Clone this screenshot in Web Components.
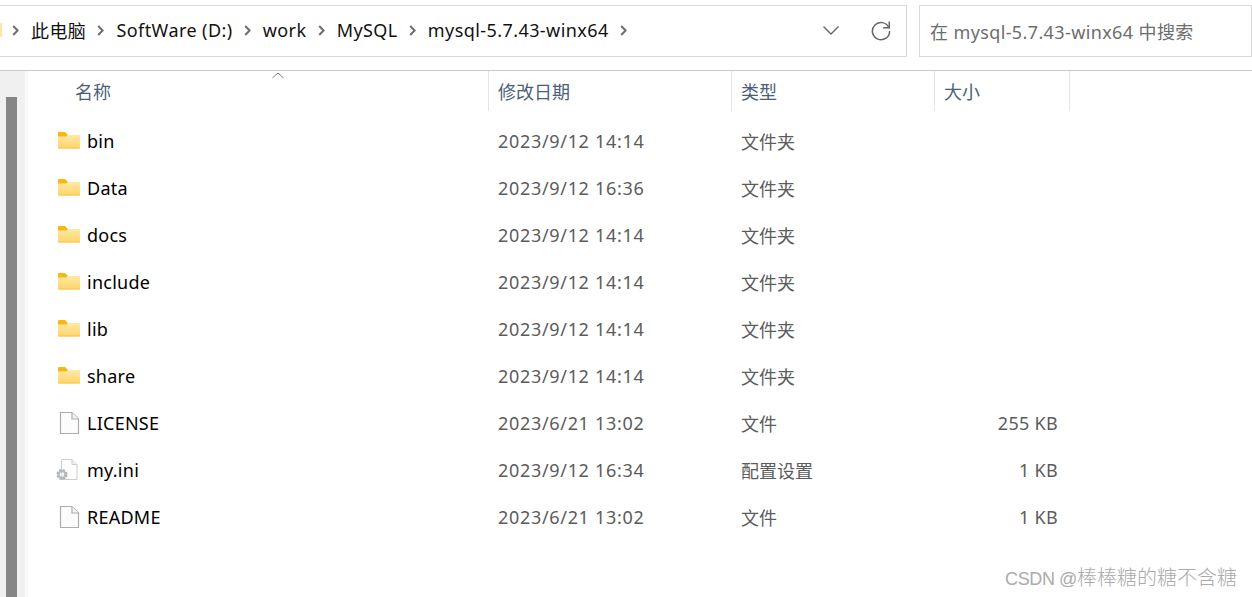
<!DOCTYPE html>
<html lang="zh">
<head>
<meta charset="utf-8">
<title>mysql-5.7.43-winx64</title>
<style>
html, body { margin: 0; padding: 0; background: #fff; }
body { width: 1252px; height: 597px; overflow: hidden; font-family: "Noto Sans", "Noto Sans CJK SC", sans-serif; }
</style>
</head>
<body>
<explorer-window>
    <address-bar slot="top">
        <crumb-item>此电脑</crumb-item>
        <crumb-item>SoftWare (D:)</crumb-item>
        <crumb-item>work</crumb-item>
        <crumb-item>MySQL</crumb-item>
        <crumb-item>mysql-5.7.43-winx64</crumb-item>
    </address-bar>
    <list-header slot="head"></list-header>
    <file-row icon="folder" name="bin" date="2023/9/12 14:14" type="文件夹"></file-row>
    <file-row icon="folder" name="Data" date="2023/9/12 16:36" type="文件夹"></file-row>
    <file-row icon="folder" name="docs" date="2023/9/12 14:14" type="文件夹"></file-row>
    <file-row icon="folder" name="include" date="2023/9/12 14:14" type="文件夹"></file-row>
    <file-row icon="folder" name="lib" date="2023/9/12 14:14" type="文件夹"></file-row>
    <file-row icon="folder" name="share" date="2023/9/12 14:14" type="文件夹"></file-row>
    <file-row icon="file" name="LICENSE" date="2023/6/21 13:02" type="文件" size="255 KB"></file-row>
    <file-row icon="ini" name="my.ini" date="2023/9/12 16:34" type="配置设置" size="1 KB"></file-row>
    <file-row icon="file" name="README" date="2023/6/21 13:02" type="文件" size="1 KB"></file-row>
</explorer-window>
<script>
(function() {
    const FONT = '"Noto Sans", "Noto Sans CJK SC", sans-serif'

    const ICONS = {
        folder: `<svg width="23" height="18" viewBox="0 0 23 18" style="margin-top:-2px">
            <defs><linearGradient id="f" x1="0" y1="0" x2="0" y2="1">
                <stop offset="0" stop-color="#ffe9a6"/><stop offset="1" stop-color="#ffd468"/>
            </linearGradient></defs>
            <path d="M0 3.5V1.8C0 1.3.3 1 .8 1H7l2.5 2.5V6H0z" fill="#f9b712"/>
            <path d="M0 5.5H8.5L10 4h11.2c.5 0 .8.3.8.8V16.5c0 .6-.4 1-1 1H1c-.6 0-1-.4-1-1z" fill="url(#f)"/>
            <path d="M0 16.5h22v.2c0 .5-.4.8-.9.8H1c-.6 0-1-.3-1-.8z" fill="#f5c654"/>
        </svg>`,
        file: `<svg width="23" height="24" viewBox="0 0 23 24">
            <path d="M2.5 1.5H14L20.5 8v14.5H2.5z" fill="#fcfcfc" stroke="#adadad" stroke-width="1.2"/>
            <path d="M14 1.5V8h6.5" fill="#f4f4f4" stroke="#adadad" stroke-width="1.2"/>
        </svg>`,
        ini: `<svg width="23" height="24" viewBox="0 0 23 24" style="overflow:visible">
            <path d="M3.5 1.5H14L19 6.5v15H3.5z" fill="#fdfdfd" stroke="#cdcdcd"/>
            <path d="M14 1.5V6.5h5" fill="#f2f2f2" stroke="#cdcdcd"/>
            <circle cx="4" cy="16.5" r="4.3" fill="none" stroke="#a9afb4" stroke-width="2.4" stroke-dasharray="2.2 1.2"/>
            <circle cx="4" cy="16.5" r="3.4" fill="none" stroke="#b5bbc0" stroke-width="2.2"/>
            <circle cx="4" cy="16.5" r="1.5" fill="#e6e8ea"/>
        </svg>`
    }

    const windowTpl = document.createElement('template')
    windowTpl.innerHTML = `
        <style>
            :host { display: flex; flex-direction: column; width: 1252px; height: 597px; font-family: ${FONT}; overflow: hidden; }
            .top { flex: none; padding-top: 5px; box-sizing: border-box; border-bottom: 1px solid #c9c9c9; height: 71px; }
            .body { flex: 1; display: flex; min-height: 0; }
            .side { flex: none; background: #f0f0f0; border-right: 3px solid #f9f9f9; padding-top: 26px; box-sizing: border-box; width: 28px; }
            .thumb { width: 11px; margin-left: 6px; height: 100%; background: #868686; }
            .main { flex: 1; min-width: 0; }
        </style>
        <div class="top"><slot name="top"></slot></div>
        <div class="body">
            <div class="side"><div class="thumb"></div></div>
            <div class="main"><slot name="head"></slot><slot></slot></div>
        </div>`

    class ExplorerWindow extends HTMLElement {
        constructor() {
            super()
            this.attachShadow({mode: 'open'})
            this.shadowRoot.appendChild(windowTpl.content.cloneNode(true))
        }
    }
    customElements.define('explorer-window', ExplorerWindow)

    const barTpl = document.createElement('template')
    barTpl.innerHTML = `
        <style>
            :host { display: flex; height: 52px; gap: 12px; margin-left: -2px; }
            .path, .search { box-sizing: border-box; height: 52px; border: 1px solid #d9d9d9; background: #fff; display: flex; align-items: center; }
            .path { width: 909px; padding-left: 1px; }
            .tag { width: 2px; height: 14px; background: #ffe6a8; margin-right: 10px; flex: none; margin-top: -2px; }
            .crumbs { flex: 1; display: flex; align-items: center; margin-top: -2px; }
            .drop { margin: -2px 30px 0 0; display: block; }
            .refresh { margin: -2px 14px 0 0; display: block; }
            .search { flex: 1; padding-left: 10px; font-size: 18px; letter-spacing: .38px; color: #6d6d6d; white-space: nowrap; }
        </style>
        <div class="path">
            <span class="tag"></span>
            <div class="crumbs"><slot></slot></div>
            <svg class="drop" width="18" height="11" viewBox="0 0 18 11"><path d="M1.5 1.5L9 9l7.5-7.5" fill="none" stroke="#666" stroke-width="1.4"/></svg>
            <svg class="refresh" width="22" height="22" viewBox="0 0 22 22"><path d="M18.8 8.5A8.6 8.6 0 1 0 19.6 12" fill="none" stroke="#666" stroke-width="1.5"/><path d="M19.3 2.6v6.2h-6.2" fill="none" stroke="#666" stroke-width="1.5"/></svg>
        </div>
        <div class="search">在 mysql-5.7.43-winx64 中搜索</div>`

    class AddressBar extends HTMLElement {
        constructor() {
            super()
            this.attachShadow({mode: 'open'})
            this.shadowRoot.appendChild(barTpl.content.cloneNode(true))
        }
    }
    customElements.define('address-bar', AddressBar)

    const crumbTpl = document.createElement('template')
    crumbTpl.innerHTML = `
        <style>
            :host { display: flex; align-items: center; font-size: 18px; letter-spacing: .42px; color: #111; white-space: nowrap; }
            svg { margin: 1px 12px 0 0; flex: none; }
            span { margin-right: 11.2px; }
        </style>
        <svg width="7" height="11" viewBox="0 0 7 11"><path d="M1.2 1l4.4 4.5L1.2 10" fill="none" stroke="#6e6e6e" stroke-width="2"/></svg>
        <span><slot></slot></span>`

    class CrumbItem extends HTMLElement {
        constructor() {
            super()
            this.attachShadow({mode: 'open'})
            this.shadowRoot.appendChild(crumbTpl.content.cloneNode(true))
        }
        connectedCallback() {
            // the last crumb also ends in a chevron
            if (!this.nextElementSibling && !this.shadowRoot.querySelector('.end')) {
                const tail = this.shadowRoot.querySelector('svg').cloneNode(true)
                tail.classList.add('end')
                this.shadowRoot.appendChild(tail)
            }
        }
    }
    customElements.define('crumb-item', CrumbItem)

    const headTpl = document.createElement('template')
    headTpl.innerHTML = `
        <style>
            :host { display: grid; grid-template-columns: 461px 243px 203px 135px; height: 40px; margin-bottom: 6px; font-size: 18px; color: #4c607a; position: relative; }
            div { border-right: 1px solid #e5e5e5; display: flex; align-items: center; padding-left: 9px; white-space: nowrap; }
            .name { padding-left: 47px; }
            .sort { position: absolute; left: 244px; top: 1px; }
        </style>
        <div class="name">名称</div>
        <div>修改日期</div>
        <div>类型</div>
        <div>大小</div>
        <svg class="sort" width="12" height="7" viewBox="0 0 12 7"><path d="M.5 6L6 1l5.5 5" fill="none" stroke="#777" stroke-width="1"/></svg>`

    class ListHeader extends HTMLElement {
        constructor() {
            super()
            this.attachShadow({mode: 'open'})
            this.shadowRoot.appendChild(headTpl.content.cloneNode(true))
        }
    }
    customElements.define('list-header', ListHeader)

    const rowTpl = document.createElement('template')
    rowTpl.innerHTML = `
        <style>
            :host { display: grid; grid-template-columns: 461px 243px 203px 123px; height: 47px; align-items: center; font-size: 18px; white-space: nowrap; }
            .name { display: flex; align-items: center; color: #000; padding-left: 30px; }
            .icon { width: 23px; height: 24px; display: flex; align-items: center; margin-right: 6px; }
            .label { letter-spacing: .25px; }
            .date, .type { color: #5c5c5c; padding-left: 9px; }
            .date { letter-spacing: .68px; }
            .size { color: #5c5c5c; text-align: right; letter-spacing: .3px; }
        </style>
        <div class="name"><span class="icon"></span><span class="label"></span></div>
        <div class="date"></div>
        <div class="type"></div>
        <div class="size"></div>`

    class FileRow extends HTMLElement {
        constructor() {
            super()
            this.attachShadow({mode: 'open'})
            this.shadowRoot.appendChild(rowTpl.content.cloneNode(true))
        }
        connectedCallback() {
            const root = this.shadowRoot
            root.querySelector('.icon').innerHTML = ICONS[this.getAttribute('icon')]
            root.querySelector('.label').textContent = this.getAttribute('name')
            root.querySelector('.date').textContent = this.getAttribute('date')
            root.querySelector('.type').textContent = this.getAttribute('type')
            root.querySelector('.size').textContent = this.getAttribute('size') || ''
        }
    }
    customElements.define('file-row', FileRow)

    const markTpl = document.createElement('template')
    markTpl.innerHTML = `
        <style>
            :host { position: absolute; right: 15px; top: 566px; font: 20px/24px "Liberation Sans", "Noto Sans CJK SC", sans-serif; font-weight: 300; color: #ababab; white-space: nowrap; }
            span { font-size: 18px; letter-spacing: -.4px; }
        </style>
        <span>CSDN @</span>棒棒糖的糖不含糖`

    class WaterMark extends HTMLElement {
        constructor() {
            super()
            this.attachShadow({mode: 'open'})
            this.shadowRoot.appendChild(markTpl.content.cloneNode(true))
        }
    }
    customElements.define('water-mark', WaterMark)
    document.body.appendChild(document.createElement('water-mark'))
}())
</script>
</body>
</html>
